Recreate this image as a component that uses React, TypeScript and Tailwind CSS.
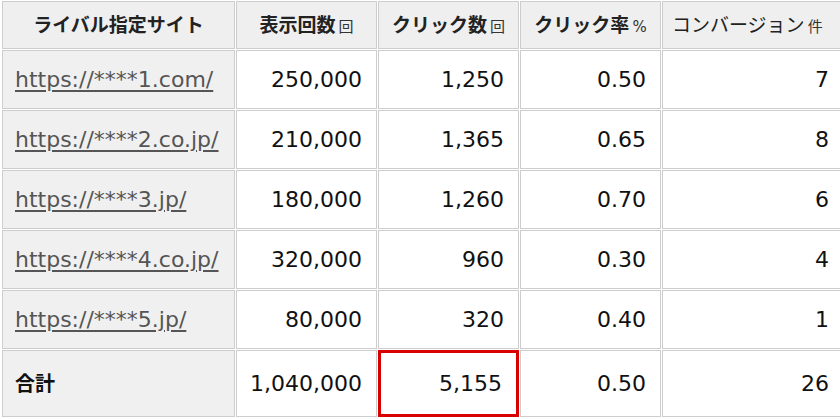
import React from "react";

type Row = {
  site: string;
  views: string;
  clicks: string;
  ctr: string;
  cv: string;
};

const rows: Row[] = [
  { site: "https://****1.com/", views: "250,000", clicks: "1,250", ctr: "0.50", cv: "7" },
  { site: "https://****2.co.jp/", views: "210,000", clicks: "1,365", ctr: "0.65", cv: "8" },
  { site: "https://****3.jp/", views: "180,000", clicks: "1,260", ctr: "0.70", cv: "6" },
  { site: "https://****4.co.jp/", views: "320,000", clicks: "960", ctr: "0.30", cv: "4" },
  { site: "https://****5.jp/", views: "80,000", clicks: "320", ctr: "0.40", cv: "1" },
];

const font = {
  fontFamily: '"DejaVu Sans", "Noto Sans CJK JP", sans-serif',
};

const th =
  "h-[48px] border border-[#cdcdcd] bg-[#efefef] text-center align-middle text-[19px] font-bold text-[#222] whitespace-nowrap";
const td =
  "h-[59px] border border-[#cdcdcd] bg-white pr-[14px] text-right align-middle text-[22px] text-[#111]";
const first =
  "h-[59px] border border-[#cdcdcd] bg-[#f0f0f0] pl-[12px] text-left align-middle whitespace-nowrap";

function Unit({ children }: { children: React.ReactNode }) {
  return <span className="ml-[3px] text-[15px] font-normal text-[#333]">{children}</span>;
}

export default function App() {
  return (
    <div className="h-[419px] w-[840px] overflow-hidden bg-white" style={font}>
      <table className="ml-px w-[880px] table-fixed border-separate border-spacing-px">
        <thead>
          <tr>
            <th className={`${th} w-[233px]`}>ライバル指定サイト</th>
            <th className={`${th} w-[141px]`}>
              表示回数<Unit>回</Unit>
            </th>
            <th className={`${th} w-[141px]`}>
              クリック数<Unit>回</Unit>
            </th>
            <th className={`${th} w-[141px]`}>
              クリック率<Unit>%</Unit>
            </th>
            <th className={`${th} w-[218px] pl-[9px] text-left font-normal`}>
              コンバージョン<Unit>件</Unit>
            </th>
          </tr>
        </thead>
        <tbody>
          {rows.map((r) => (
            <tr key={r.site}>
              <td className={first}>
                <a href="#" className="text-[22px] text-[#555] underline underline-offset-[3px]">
                  {r.site}
                </a>
              </td>
              <td className={td}>{r.views}</td>
              <td className={td}>{r.clicks}</td>
              <td className={td}>{r.ctr}</td>
              <td className={`${td} pr-[50px]`}>{r.cv}</td>
            </tr>
          ))}
          <tr>
            <td className={`${first} h-[67px] text-[20px] font-bold text-[#111]`}>合計</td>
            <td className={`${td} h-[67px]`}>1,040,000</td>
            <td className={`${td} h-[67px] border-[3px] border-[#d90000] pr-[12px]`}>5,155</td>
            <td className={`${td} h-[67px]`}>0.50</td>
            <td className={`${td} h-[67px] pr-[50px]`}>26</td>
          </tr>
        </tbody>
      </table>
    </div>
  );
}
